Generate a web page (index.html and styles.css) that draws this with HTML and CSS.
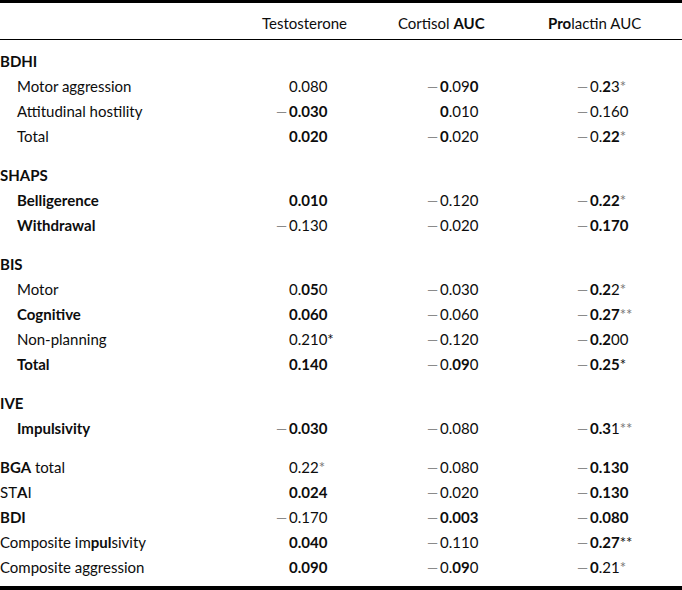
FILE: index.html
```html
<!DOCTYPE html>
<html>
<head>
<meta charset="utf-8">
<link rel="stylesheet" href="styles.css">
</head>
<body>
<div class="table">
  <div class="head">
    <div></div>
    <div>Testosterone</div>
    <div>Cortisol <b>AUC</b></div>
    <div><b>Pro</b>lactin AUC</div>
  </div>
  <div class="body">
    <div class="row grp first"><div class="lbl"><b>BDHI</b></div><div></div><div></div><div></div></div>
    <div class="row"><div class="lbl sub">Motor aggression</div><div class="num"><span class="m"></span>0.080</div><div class="num"><span class="m">—</span><b>0</b>.09<b>0</b></div><div class="num"><span class="m">—</span>0.<b>2</b>3<span class="s">*</span></div></div>
    <div class="row"><div class="lbl sub">Attitudinal hostility</div><div class="num"><span class="m">—</span><b>0.030</b></div><div class="num"><span class="m"></span><b>0</b>.010</div><div class="num"><span class="m">—</span>0.160</div></div>
    <div class="row"><div class="lbl sub">Total</div><div class="num"><span class="m"></span><b>0.020</b></div><div class="num"><span class="m">—</span><b>0</b>.020</div><div class="num"><span class="m">—</span>0.<b>22</b><span class="s">*</span></div></div>

    <div class="row grp"><div class="lbl"><b>SHAPS</b></div><div></div><div></div><div></div></div>
    <div class="row"><div class="lbl sub"><b>Belligerence</b></div><div class="num"><span class="m"></span><b>0.010</b></div><div class="num"><span class="m">—</span>0.120</div><div class="num"><span class="m">—</span><b>0.22</b><span class="s">*</span></div></div>
    <div class="row"><div class="lbl sub"><b>Withdrawal</b></div><div class="num"><span class="m">—</span>0.130</div><div class="num"><span class="m">—</span>0.020</div><div class="num"><span class="m">—</span><b>0.170</b></div></div>

    <div class="row grp"><div class="lbl"><b>BIS</b></div><div></div><div></div><div></div></div>
    <div class="row"><div class="lbl sub">Motor</div><div class="num"><span class="m"></span>0.<b>05</b>0</div><div class="num"><span class="m">—</span>0.030</div><div class="num"><span class="m">—</span><b>0.2</b>2<span class="s">*</span></div></div>
    <div class="row"><div class="lbl sub"><b>Cognitive</b></div><div class="num"><span class="m"></span><b>0.060</b></div><div class="num"><span class="m">—</span>0.060</div><div class="num"><span class="m">—</span><b>0.27</b><span class="s">**</span></div></div>
    <div class="row"><div class="lbl sub">Non-planning</div><div class="num"><span class="m"></span>0.210*</div><div class="num"><span class="m">—</span>0.120</div><div class="num"><span class="m">—</span><b>0.2</b>00</div></div>
    <div class="row"><div class="lbl sub"><b>Total</b></div><div class="num"><span class="m"></span><b>0.140</b></div><div class="num"><span class="m">—</span>0.<b>09</b>0</div><div class="num"><span class="m">—</span><b>0.25</b>*</div></div>

    <div class="row grp"><div class="lbl"><b>IVE</b></div><div></div><div></div><div></div></div>
    <div class="row"><div class="lbl sub"><b>Impulsivity</b></div><div class="num"><span class="m">—</span><b>0.030</b></div><div class="num"><span class="m">—</span>0.080</div><div class="num"><span class="m">—</span><b>0.3</b>1<span class="s">**</span></div></div>

    <div class="row grp"><div class="lbl"><b>BGA</b> total</div><div class="num"><span class="m"></span>0.22<span class="s">*</span></div><div class="num"><span class="m">—</span>0.080</div><div class="num"><span class="m">—</span><b>0.130</b></div></div>
    <div class="row"><div class="lbl">ST<b>A</b>I</div><div class="num"><span class="m"></span><b>0.024</b></div><div class="num"><span class="m">—</span>0.020</div><div class="num"><span class="m">—</span><b>0.130</b></div></div>
    <div class="row"><div class="lbl"><b>BDI</b></div><div class="num"><span class="m">—</span>0.170</div><div class="num"><span class="m">—</span><b>0.003</b></div><div class="num"><span class="m">—</span><b>0.080</b></div></div>
    <div class="row"><div class="lbl">Composite im<b>pul</b>sivity</div><div class="num"><span class="m"></span><b>0.040</b></div><div class="num"><span class="m">—</span>0.110</div><div class="num"><span class="m">—</span><b>0.27</b>**</div></div>
    <div class="row"><div class="lbl">Composite aggression</div><div class="num"><span class="m"></span><b>0.090</b></div><div class="num"><span class="m">—</span>0.<b>09</b>0</div><div class="num"><span class="m">—</span><b>0</b>.21<span class="s">*</span></div></div>
  </div>
</div>
</body>
</html>
```
FILE: styles.css
```css
html, body {
  margin: 0;
  padding: 0;
  background: #ffffff;
}
body {
  font-family: Lato, "Open Sans", sans-serif;
  font-size: 15px;
  color: #0d0d0d;
}
.table {
  width: 682px;
  border-top: 3px solid #000;
  border-bottom: 4px solid #000;
  padding-bottom: 6px;
  box-sizing: border-box;
  height: 590px;
}
.head {
  display: grid;
  grid-template-columns: 262px 136px 150px 1fr;
  height: 37px;
  align-items: center;
  border-bottom: 1px solid #000;
  box-sizing: border-box;
  padding-top: 4px;
}
.body {
  display: flex;
  flex-direction: column;
}
.row {
  display: grid;
  grid-template-columns: 261px 151px 150px 1fr;
  height: 25px;
  line-height: 25px;
  align-items: center;
}
.grp {
  margin-top: 14px;
}
.grp.first {
  margin-top: 9px;
}
.lbl {
  white-space: nowrap;
}
.sub {
  padding-left: 17px;
}
.num {
  padding-left: 13px;
  white-space: nowrap;
}
.m {
  display: inline-block;
  width: 15px;
  padding-right: 2px;
  box-sizing: border-box;
  text-align: right;
  font-size: 14px;
  vertical-align: top;
  color: #8a8a8a;
}
.s {
  color: #777;
}
b {
  font-weight: 700;
}
```
